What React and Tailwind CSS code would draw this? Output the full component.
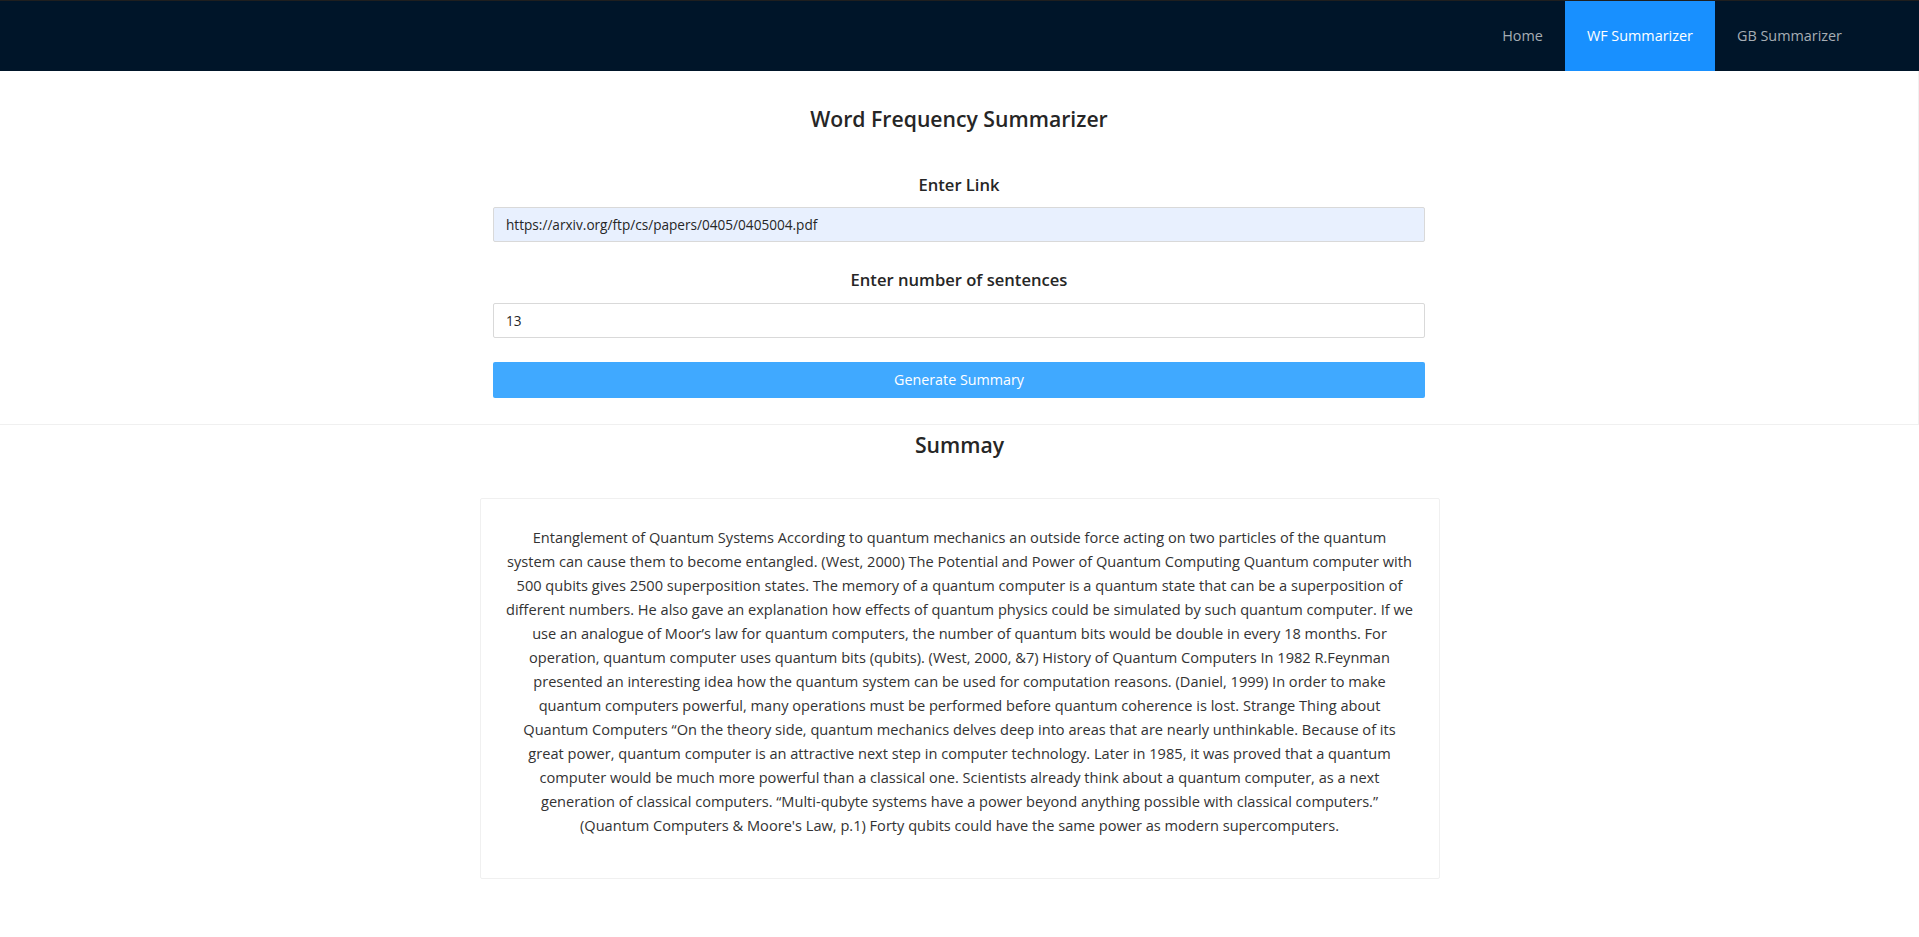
import { useState } from 'react';

const summaryLines = [
  'Entanglement of Quantum Systems According to quantum mechanics an outside force acting on two particles of the quantum',
  'system can cause them to become entangled. (West, 2000) The Potential and Power of Quantum Computing Quantum computer with',
  '500 qubits gives 2500 superposition states. The memory of a quantum computer is a quantum state that can be a superposition of',
  'different numbers. He also gave an explanation how effects of quantum physics could be simulated by such quantum computer. If we',
  'use an analogue of Moor\u2019s law for quantum computers, the number of quantum bits would be double in every 18 months. For',
  'operation, quantum computer uses quantum bits (qubits). (West, 2000, &7) History of Quantum Computers In 1982 R.Feynman',
  'presented an interesting idea how the quantum system can be used for computation reasons. (Daniel, 1999) In order to make',
  'quantum computers powerful, many operations must be performed before quantum coherence is lost. Strange Thing about',
  'Quantum Computers \u201COn the theory side, quantum mechanics delves deep into areas that are nearly unthinkable. Because of its',
  'great power, quantum computer is an attractive next step in computer technology. Later in 1985, it was proved that a quantum',
  'computer would be much more powerful than a classical one. Scientists already think about a quantum computer, as a next',
  'generation of classical computers. \u201CMulti-qubyte systems have a power beyond anything possible with classical computers.\u201D',
  '(Quantum Computers & Moore\'s Law, p.1) Forty qubits could have the same power as modern supercomputers.',
];

const navItems = ['Home', 'WF Summarizer', 'GB Summarizer'];

function Header() {
  const [active, setActive] = useState('WF Summarizer');
  return (
    <header className="h-[71px] bg-[#001529] border-t border-[#1f1f1f] flex justify-end pr-[55px]">
      {navItems.map((item) => (
        <button
          key={item}
          onClick={() => setActive(item)}
          className={
            item === active
              ? 'h-full px-[22px] bg-[#1890ff] text-white text-[14.4px]'
              : 'h-full px-[22px] text-[#a6adb4] text-[14.4px] hover:text-white'
          }
        >
          {item}
        </button>
      ))}
    </header>
  );
}

export default function App() {
  const [link, setLink] = useState('https://arxiv.org/ftp/cs/papers/0405/0405004.pdf');
  const [count, setCount] = useState('13');

  return (
    <div className="min-h-[937px] bg-white text-[#262626] font-['Open_Sans',sans-serif]">
      <Header />

      {/* Form section */}
      <section className="border-b border-r border-[#f0f0f0] pt-[33px] pb-[26px]">
        <div className="w-[932px] mx-auto flex flex-col">
          <h2 className="text-center text-[21.2px] leading-[30px] font-semibold">Word Frequency Summarizer</h2>
          <label className="mt-[39px] text-center text-[16.6px] leading-[24px] font-semibold">Enter Link</label>
          <input
            value={link}
            onChange={(e) => setLink(e.target.value)}
            className="mt-[10px] h-[35px] px-[12px] bg-[#e8f0fe] border border-[#d9d9d9] rounded-[2px] text-[13.6px] outline-none"
          />
          <label className="mt-[26px] text-center text-[16.6px] leading-[24px] font-semibold">Enter number of sentences</label>
          <input
            value={count}
            onChange={(e) => setCount(e.target.value)}
            className="mt-[11px] h-[35px] px-[12px] bg-white border border-[#d9d9d9] rounded-[2px] text-[13.6px] outline-none"
          />
          <button className="mt-[24px] h-[36px] bg-[#40a9ff] text-white text-[14.3px] rounded-[2px]">
            Generate Summary
          </button>
        </div>
      </section>

      {/* Summary */}
      <h2 className="mt-[5px] text-center text-[21.2px] leading-[30px] font-semibold">Summay</h2>
      <div className="w-[960px] mx-auto mt-[38px] mb-[59px] border border-[#f0f0f0] rounded-[2px] pt-[26px] pb-[41px] px-[20px]">
        <p className="text-center text-[14.6px] leading-[24px] text-[#333333]">
          {summaryLines.map((line, i) => (
            <span key={i} className="block whitespace-nowrap">{line}</span>
          ))}
        </p>
      </div>
    </div>
  );
}
